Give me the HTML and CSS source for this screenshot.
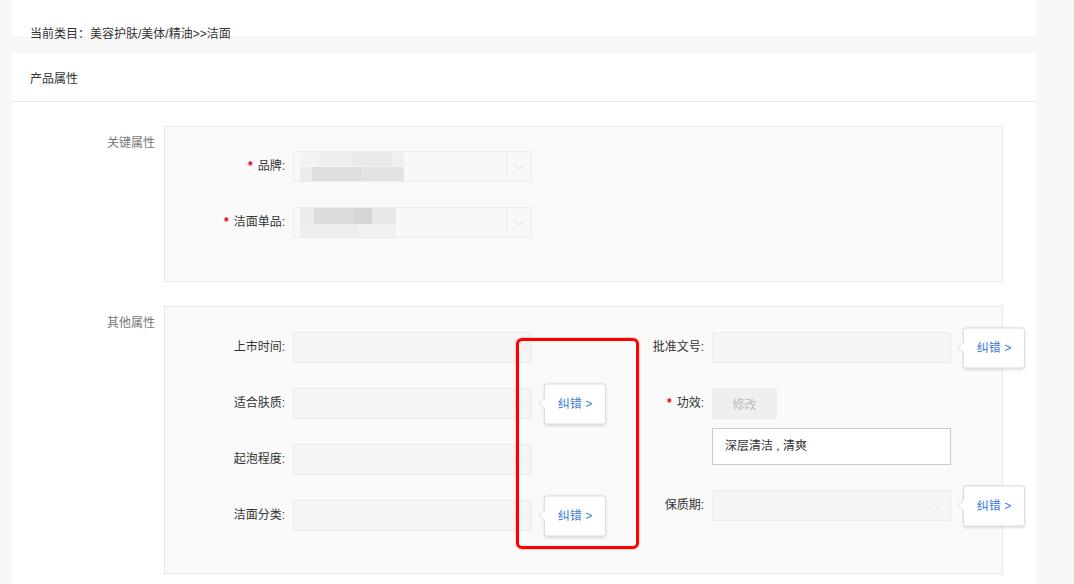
FILE: index.html
```html
<!DOCTYPE html>
<html lang="zh-CN">
<head>
    <meta charset="UTF-8">
    <title>产品属性</title>
    <link rel="stylesheet" href="styles.css">
</head>
<body>
    <div class="page">
        <div class="card crumb">当前类目：美容护肤/美体/精油&gt;&gt;洁面</div>

        <div class="card">
            <div class="card-head">产品属性</div>
            <div class="card-body">
                <!-- key attributes -->
                <div class="group">
                    <div class="group-label">关键属性</div>
                    <div class="group-box key-box">
                        <div class="field">
                            <label class="field-label"><span class="req">*</span>品牌:</label>
                            <div class="control select split">
                                <div class="mosaic mosaic-a"></div>
                                <span class="arrow"><svg width="12" height="7" viewBox="0 0 12 7"><path d="M1 1l5 5 5-5" fill="none" stroke="#e2e2e2" stroke-width="1"/></svg></span>
                            </div>
                        </div>
                        <div class="field">
                            <label class="field-label"><span class="req">*</span>洁面单品:</label>
                            <div class="control select split">
                                <div class="mosaic mosaic-b"></div>
                                <span class="arrow"><svg width="12" height="7" viewBox="0 0 12 7"><path d="M1 1l5 5 5-5" fill="none" stroke="#e2e2e2" stroke-width="1"/></svg></span>
                            </div>
                        </div>
                    </div>
                </div>

                <!-- other attributes -->
                <div class="group">
                    <div class="group-label">其他属性</div>
                    <div class="group-box other-box">
                        <div class="col">
                            <div class="field">
                                <label class="field-label">上市时间:</label>
                                <div class="control"></div>
                            </div>
                            <div class="field">
                                <label class="field-label">适合肤质:</label>
                                <div class="control select">
                                    <span class="arrow"><svg width="12" height="7" viewBox="0 0 12 7"><path d="M1 1l5 5 5-5" fill="none" stroke="#e6e6e6" stroke-width="1"/></svg></span>
                                    <div class="tip">纠错 &gt;</div>
                                </div>
                            </div>
                            <div class="field">
                                <label class="field-label">起泡程度:</label>
                                <div class="control select">
                                    <span class="arrow"><svg width="12" height="7" viewBox="0 0 12 7"><path d="M1 1l5 5 5-5" fill="none" stroke="#e6e6e6" stroke-width="1"/></svg></span>
                                </div>
                            </div>
                            <div class="field">
                                <label class="field-label">洁面分类:</label>
                                <div class="control select">
                                    <span class="arrow"><svg width="12" height="7" viewBox="0 0 12 7"><path d="M1 1l5 5 5-5" fill="none" stroke="#e6e6e6" stroke-width="1"/></svg></span>
                                    <div class="tip">纠错 &gt;</div>
                                </div>
                            </div>
                        </div>

                        <div class="col">
                            <div class="field">
                                <label class="field-label">批准文号:</label>
                                <div class="control">
                                    <div class="tip">纠错 &gt;</div>
                                </div>
                            </div>
                            <div class="field field-top">
                                <label class="field-label"><span class="req">*</span>功效:</label>
                                <div class="stack">
                                    <button class="btn-edit" disabled>修改</button>
                                    <div class="tag-box">深层清洁 , 清爽</div>
                                </div>
                            </div>
                            <div class="field">
                                <label class="field-label">保质期:</label>
                                <div class="control select">
                                    <span class="arrow"><svg width="12" height="7" viewBox="0 0 12 7"><path d="M1 1l5 5 5-5" fill="none" stroke="#e6e6e6" stroke-width="1"/></svg></span>
                                    <div class="tip">纠错 &gt;</div>
                                </div>
                            </div>
                        </div>

                        <div class="mark"></div>
                    </div>
                </div>
            </div>
        </div>
    </div>
</body>
</html>
```

FILE: styles.css
```css
:root {
    --page-bg: #f7f7f7;
    --text: #333333;
    --muted: #777777;
    --line: #e8e8e8;
    --box-bg: #fafafa;
    --input-bg: #f5f5f5;
    --input-border: #ececec;
    --link: #3a7be0;
}

* {
    box-sizing: border-box;
}

body {
    margin: 0;
    background: var(--page-bg);
    color: var(--text);
    font-family: "Liberation Sans", "Noto Sans CJK SC", sans-serif;
    font-size: 12px;
}

.page {
    width: 1024px;
    margin-left: 12px;
}

.card {
    background: #fff;
}

.crumb {
    height: 36px;
    padding: 26px 0 0 18px;
    line-height: 16px;
    white-space: nowrap;
    margin-bottom: 17px;
}

.card-head {
    height: 49px;
    padding: 18px 0 0 18px;
    line-height: 16px;
    border-bottom: 1px solid var(--line);
}

.card-body {
    padding: 24px 33px 40px 0;
}

.group {
    display: flex;
    margin-bottom: 24px;
}

.group-label {
    width: 143px;
    margin-right: 9px;
    padding-top: 9px;
    line-height: 16px;
    text-align: right;
    color: var(--muted);
}

.group-box {
    position: relative;
    flex: 1;
    background: var(--box-bg);
    border: 1px solid var(--line);
}

.key-box {
    padding: 24px 0 43px;
}

.other-box {
    display: grid;
    grid-template-columns: 419px 1fr;
    align-items: start;
    padding: 25px 0 42px;
}

.field {
    display: flex;
    align-items: center;
    margin-bottom: 25px;
}

.field:last-child {
    margin-bottom: 0;
}

.field-top {
    align-items: flex-start;
}

.field-label {
    width: 120px;
    margin-right: 8px;
    line-height: 31px;
    text-align: right;
    white-space: nowrap;
}

.req {
    color: #e60012;
    font-weight: bold;
    margin-right: 5px;
}

.control {
    position: relative;
    width: 239px;
    height: 31px;
    background: var(--input-bg);
    border: 1px solid var(--input-border);
}

.select .arrow {
    position: absolute;
    right: 0;
    top: 0;
    width: 25px;
    height: 29px;
    display: flex;
    align-items: center;
    justify-content: center;
}

.split .arrow {
    border-left: 1px solid var(--input-border);
}

.split {
    background: #f8f8f8;
}

.mosaic {
    position: absolute;
    left: 6px;
    top: 0;
    height: 29px;
}

.mosaic-a {
    width: 104px;
    background:
        linear-gradient(to right, #f3f3f3 0 18%, #efefef 18% 50%, #e9e9e9 50% 88%, #f0f0f0 88%) top / 100% 50% no-repeat,
        linear-gradient(to right, #ececec 0 12%, #dedede 12% 60%, #e3e3e3 60% 100%) bottom / 100% 50% no-repeat;
}

.mosaic-b {
    width: 96px;
    background:
        linear-gradient(to right, #ececec 0 15%, #dddddd 15% 55%, #d6d6d6 55% 75%, #e8e8e8 75%) top / 100% 55% no-repeat,
        linear-gradient(to right, #eeeeee 0 60%, #f1f1f1 60% 100%) bottom / 100% 45% no-repeat;
}

.stack {
    display: flex;
    flex-direction: column;
    align-items: flex-start;
    gap: 9px;
}

.btn-edit {
    width: 65px;
    height: 31px;
    border: none;
    border-radius: 2px;
    background: #efefef;
    color: #bbbbbb;
    font-family: inherit;
    font-size: 12px;
}

.tag-box {
    width: 239px;
    height: 37px;
    padding-left: 12px;
    line-height: 35px;
    background: #fff;
    border: 1px solid #cccccc;
}

/* correction popover beside a field */
.tip {
    position: absolute;
    left: calc(100% + 13px);
    top: 50%;
    transform: translateY(-50%);
    width: 62px;
    height: 41px;
    line-height: 39px;
    text-align: center;
    color: var(--link);
    background: #fff;
    border: 1px solid #dddddd;
    border-radius: 3px;
    box-shadow: 0 1px 3px rgba(0, 0, 0, 0.12);
    z-index: 2;
}

.tip::before,
.tip::after {
    content: "";
    position: absolute;
    top: 50%;
    transform: translateY(-50%);
    border-style: solid;
    border-color: transparent;
}

.tip::before {
    left: -7px;
    border-width: 6px 7px 6px 0;
    border-right-color: #dddddd;
}

.tip::after {
    left: -6px;
    border-width: 5px 6px 5px 0;
    border-right-color: #fff;
}

/* red annotation frame */
.mark {
    position: absolute;
    left: 351px;
    top: 31px;
    width: 123px;
    height: 211px;
    border: 3px solid #ff0000;
    border-radius: 6px;
    box-shadow: 0 0 2px rgba(255, 0, 0, 0.5);
    z-index: 1;
}
```
